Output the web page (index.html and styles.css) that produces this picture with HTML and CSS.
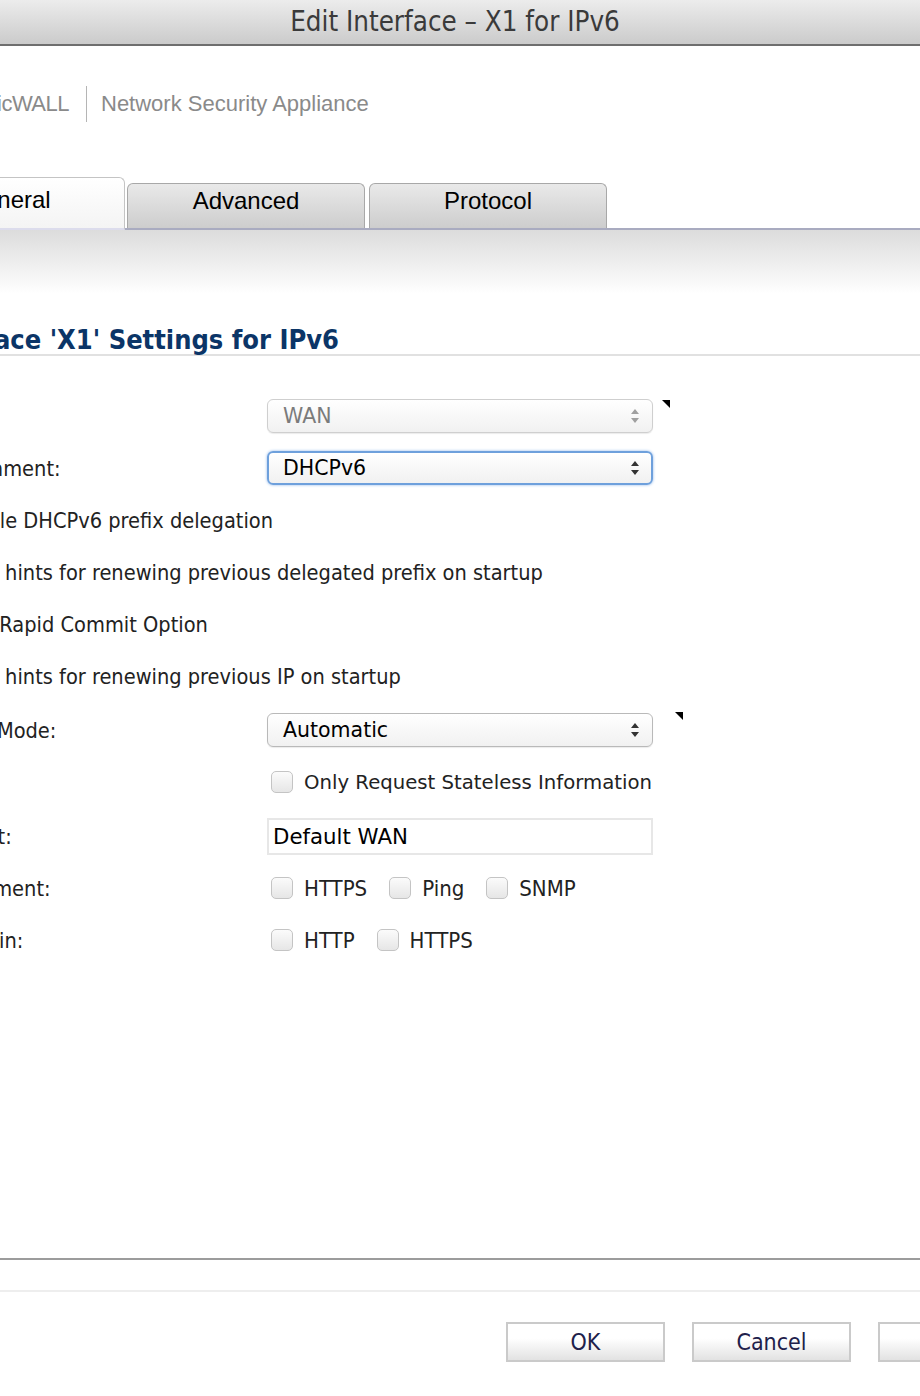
FILE: index.html
```html
<!DOCTYPE html>
<html>
<head>
<meta charset="utf-8">
<title>Edit Interface - X1 for IPv6</title>
<link rel="stylesheet" href="styles.css">
</head>
<body>
<div class="titlebar">Edit Interface – X1 for IPv6</div>
<div class="dialog">
  <div class="brand">
    <span class="brand-name">SonicWALL</span>
    <span class="brand-sep"></span>
    <span class="brand-desc">Network Security Appliance</span>
  </div>
  <div class="tabs">
    <div class="tab active">General</div>
    <div class="tab">Advanced</div>
    <div class="tab">Protocol</div>
  </div>
  <div class="tabshade"></div>
  <h2 class="section-title">Interface 'X1' Settings for IPv6</h2>

  <div class="form">
    <div class="row">
      <div class="label">Zone:</div>
      <div class="field">
        <div class="select disabled"><span>WAN</span><svg class="arrows" width="10" height="16" viewBox="0 0 10 16"><path d="M5 1 L9 6 H1 Z M5 15 L9 10 H1 Z"/></svg></div>
        <span class="corner c1"></span>
      </div>
    </div>
    <div class="row">
      <div class="label">IP Assignment:</div>
      <div class="field">
        <div class="select focused"><span>DHCPv6</span><svg class="arrows" width="10" height="16" viewBox="0 0 10 16"><path d="M5 1 L9 6 H1 Z M5 15 L9 10 H1 Z"/></svg></div>
      </div>
    </div>
    <div class="row check-row ind-a">
      <span class="cb"></span><span class="ctext">Enable DHCPv6 prefix delegation</span>
    </div>
    <div class="row check-row ind-b">
      <span class="cb"></span><span class="ctext">Send hints for renewing previous delegated prefix on startup</span>
    </div>
    <div class="row check-row ind-c">
      <span class="cb"></span><span class="ctext">Enable Rapid Commit Option</span>
    </div>
    <div class="row check-row ind-b">
      <span class="cb"></span><span class="ctext">Send hints for renewing previous IP on startup</span>
    </div>
    <div class="row gap2">
      <div class="label lbl-mode">DHCPv6 Mode:</div>
      <div class="field">
        <div class="select"><span>Automatic</span><svg class="arrows" width="10" height="16" viewBox="0 0 10 16"><path d="M5 1 L9 6 H1 Z M5 15 L9 10 H1 Z"/></svg></div>
        <span class="corner c2"></span>
      </div>
    </div>
    <div class="row">
      <div class="label"></div>
      <div class="field">
        <label class="opt wide"><span class="cb"></span><span class="otext lg">Only Request Stateless Information</span></label>
      </div>
    </div>
    <div class="row gap2">
      <div class="label lbl-comment">Comment:</div>
      <div class="field">
        <div class="textbox">Default WAN</div>
      </div>
    </div>
    <div class="row">
      <div class="label">Management:</div>
      <div class="field">
        <label class="opt"><span class="cb"></span><span class="otext">HTTPS</span></label>
        <label class="opt"><span class="cb"></span><span class="otext">Ping</span></label>
        <label class="opt"><span class="cb"></span><span class="otext">SNMP</span></label>
      </div>
    </div>
    <div class="row">
      <div class="label lbl-login">User Login:</div>
      <div class="field">
        <label class="opt"><span class="cb"></span><span class="otext">HTTP</span></label>
        <label class="opt"><span class="cb"></span><span class="otext">HTTPS</span></label>
      </div>
    </div>
  </div>

  <div class="footer">
    <div class="buttons">
      <button class="btn">OK</button>
      <button class="btn">Cancel</button>
      <button class="btn">Help</button>
    </div>
  </div>
</div>
</body>
</html>
```

FILE: styles.css
```css
html, body {
  margin: 0;
  padding: 0;
  background: #ffffff;
}
body {
  width: 920px;
  height: 1396px;
  overflow: hidden;
  font-family: "DejaVu Sans Condensed", "DejaVu Sans", sans-serif;
}

.titlebar {
  height: 44px;
  line-height: 42px;
  text-align: center;
  font-family: "DejaVu Sans Condensed", "DejaVu Sans", sans-serif;
  font-size: 27.5px;
  color: #3a3a3a;
  background: linear-gradient(#ececec, #cbcbcb);
  border-bottom: 2px solid #6e6e6e;
  padding-right: 10px;
}

.dialog {
  margin-left: -130px;
  width: 1300px;
}

/* brand */
.brand {
  height: 131px;
  display: flex;
  align-items: center;
  padding-bottom: 16px;
  box-sizing: border-box;
  font-family: "Liberation Sans", Arial, sans-serif;
  font-size: 22px;
  color: #8a8a8a;
}
.brand-name {
  width: 199px;
  text-align: right;
  letter-spacing: -0.5px;
}
.brand-sep {
  width: 1px;
  height: 36px;
  background: #b5b5b5;
  margin: 0 14px 0 17px;
}

/* tabs */
.tabs {
  display: flex;
  align-items: flex-end;
  height: 51px;
  padding-left: 21px;
  border-bottom: 2px solid #a9abc0;
  font-family: "Liberation Sans", Arial, sans-serif;
  font-size: 24px;
  color: #000;
}
.tab {
  width: 236px;
  height: 44px;
  line-height: 34px;
  text-align: center;
  border: 1px solid #a8a8a8;
  border-bottom: none;
  border-radius: 6px 6px 0 0;
  background: linear-gradient(#e9e9e9, #cdcdcd);
  margin-right: 4px;
}
.tab.active {
  width: 232px;
  height: 50px;
  line-height: 44px;
  background: linear-gradient(#ffffff, #f4f4f4);
  border-color: #c4c4c4;
  margin-right: 2px;
  margin-bottom: -2px;
  border-bottom: 2px solid #dcdcec;
  box-sizing: content-box;
}

.tabshade {
  height: 64px;
  background: linear-gradient(#dcdcdc, #ffffff);
}

.section-title {
  margin: 0;
  padding: 32px 0 0 47px;
  height: 28px;
  font-family: "DejaVu Sans Condensed", "DejaVu Sans", sans-serif;
  font-weight: bold;
  font-size: 27px;
  line-height: 28px;
  color: #0b3567;
  border-bottom: 2px solid #e1e1e1;
}

/* form */
.form {
  padding: 34px 0 0 46px;
  height: 902px;
  box-sizing: border-box;
  font-size: 21.6px;
  color: #222;
}
.row {
  display: flex;
  align-items: center;
  height: 52px;
}
.row.gap2 {
  margin-top: 2px;
}
.label {
  width: 351px;
  flex: none;
  white-space: nowrap;
}
.lbl-mode { margin-left: -4px; margin-right: 4px; }
.lbl-comment { margin-left: -6px; margin-right: 6px; }
.lbl-login { margin-left: -2px; margin-right: 2px; }

.field {
  display: flex;
  align-items: center;
  position: relative;
}

.select {
  width: 386px;
  height: 34px;
  box-sizing: border-box;
  border: 1px solid #b9b9b9;
  border-radius: 6px;
  background: linear-gradient(#ffffff, #f1f1f1);
  box-shadow: 0 1px 1px rgba(0,0,0,0.08);
  display: flex;
  align-items: center;
  justify-content: space-between;
  padding: 0 12px 0 15px;
  font-family: "DejaVu Sans", sans-serif;
  font-size: 20.5px;
  color: #000;
}
.select.disabled {
  color: #7b7b7b;
  border-color: #cfcfcf;
}
.select.disabled .arrows {
  fill: #a0a0a0;
}
.select.focused {
  border: 2px solid #6ea0dc;
  box-shadow: 0 0 3px #8db6ea;
  padding-left: 14px;
  padding-right: 11px;
}
.arrows {
  fill: #333;
}

.corner {
  position: absolute;
  width: 0;
  height: 0;
  border-top: 8px solid #000;
  border-left: 8px solid transparent;
  top: 1px;
}
.corner.c1 { left: 395px; }
.corner.c2 { left: 408px; top: -1px; }

.cb {
  display: inline-block;
  width: 22px;
  height: 22px;
  box-sizing: border-box;
  border: 1px solid #c4c4c4;
  border-radius: 5px;
  background: linear-gradient(#fbfbfb, #e6e6e6);
  flex: none;
}

.check-row .cb {
  margin-right: 10px;
}
.ind-a { padding-left: 3px; }
.ind-b { padding-left: 2px; }
.ind-c { margin-left: -21px; }
.ctext { white-space: nowrap; }

.opt {
  display: flex;
  align-items: center;
  margin-left: 4px;
  margin-right: 18px;
  font-size: 22px;
}
.opt .cb {
  margin-right: 11px;
}
.otext.lg {
  font-family: "DejaVu Sans", sans-serif;
  font-size: 19.7px;
}

.textbox {
  width: 386px;
  height: 37px;
  box-sizing: border-box;
  border: 2px solid #e7e7e7;
  padding-left: 4px;
  line-height: 33px;
  font-family: "DejaVu Sans", sans-serif;
  font-size: 21.3px;
  color: #000;
}

/* footer */
.footer {
  border-top: 2px solid #9c9c9c;
}
.buttons {
  border-top: 2px solid #eeeeee;
  margin-top: 30px;
  padding: 30px 0 0 636px;
  display: flex;
  gap: 27px;
}
.btn {
  width: 159px;
  height: 40px;
  border: 2px solid #cacaca;
  background: linear-gradient(#ffffff 40%, #e2e2e2);
  font-family: "DejaVu Sans Condensed", "DejaVu Sans", sans-serif;
  font-size: 23px;
  color: #20204a;
  padding: 0;
}
```
